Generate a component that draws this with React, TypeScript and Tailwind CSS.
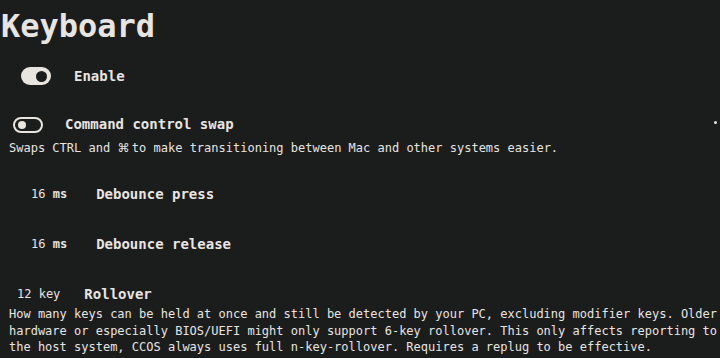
import React from "react";

const mono = "font-['DejaVu_Sans_Mono',monospace]";

function Toggle({ on }: { on: boolean }) {
  if (on) {
    return (
      <div className="flex h-[18px] w-[30px] items-center justify-end rounded-full bg-[#e8e5e1] pr-[4px]">
        <div className="size-[11px] rounded-full bg-[#1b1c1c]" />
      </div>
    );
  }
  return (
    <div className="flex h-[16px] w-[30px] items-center rounded-full border-2 border-[#e8e5e1] pl-[3px]">
      <div className="size-[8px] rounded-full bg-[#e8e5e1]" />
    </div>
  );
}

function Row({ value, unit, label }: { value: string; unit: string; label: string }) {
  return (
    <div className="flex h-[20px] items-center">
      <span className="text-[12px] leading-[20px]">
        {value} <span className="font-bold">{unit}</span>
      </span>
      <span className="ml-[29px] text-[14px] font-bold leading-[20px]">{label}</span>
    </div>
  );
}

export default function App() {
  return (
    <div className={`relative h-[358px] w-[720px] overflow-hidden bg-[#1b1c1c] text-[#e8e5e1] ${mono}`}>
      <div className="absolute left-[714px] top-[121px] size-[3px] rounded-full bg-[#e8e5e1]" />
      <div className="flex flex-col">
        <h1 className="pl-[1px] pt-[6px] text-[32px] font-bold leading-[40px]">Keyboard</h1>

        <div className="mt-[21px] flex h-[18px] items-center pl-[21px]">
          <Toggle on />
          <span className="ml-[23px] text-[14px] font-bold leading-[18px]">Enable</span>
        </div>

        <div className="mt-[31px] flex h-[17px] items-center pl-[13px]">
          <Toggle on={false} />
          <span className="ml-[22px] text-[14px] font-bold leading-[17px]">Command control swap</span>
        </div>
        <p className="mt-[7px] h-[16px] pl-[9px] text-[12px] leading-[16px]">
          Swaps CTRL and{" "}
          <span className="inline-block w-[7.22px] text-center font-['DejaVu_Sans',sans-serif] text-[12px] leading-[16px]">
            ⌘
          </span>{" "}
          to make transitioning between Mac and other systems easier.
        </p>

        <div className="mt-[28px] pl-[31px]">
          <Row value="16" unit="ms" label="Debounce press" />
        </div>
        <div className="mt-[30px] pl-[31px]">
          <Row value="16" unit="ms" label="Debounce release" />
        </div>

        <div className="mt-[30px] flex h-[20px] items-center pl-[17px]">
          <span className="text-[12px] leading-[20px]">12 key</span>
          <span className="ml-[24px] text-[14px] font-bold leading-[20px]">Rollover</span>
        </div>
        <p className="mt-[2px] pl-[9px] pr-[2px] text-[12px] leading-[16.5px]">
          How many keys can be held at once and still be detected by your PC, excluding modifier keys. Older
          hardware or especially BIOS/UEFI might only support 6-key rollover. This only affects reporting to
          the host system, CCOS always uses full n-key-rollover. Requires a replug to be effective.
        </p>
      </div>
    </div>
  );
}
